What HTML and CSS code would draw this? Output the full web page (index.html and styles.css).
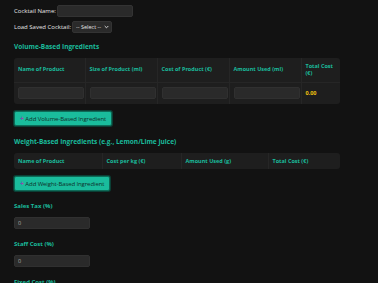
FILE: index.html
```html
<!DOCTYPE html>
<html lang="en">
<head>
    <meta charset="UTF-8">
    <meta name="viewport" content="width=device-width, initial-scale=1.0">
    <title>Cocktail Cost Calculator</title>
    <link rel="stylesheet" href="styles.css">
</head>
<body>
    <div class="calculator">
        <div class="field-row">
            <label for="cocktail-name">Cocktail Name:</label>
            <input type="text" id="cocktail-name" class="name-input">
        </div>
        <div class="field-row">
            <label for="saved">Load Saved Cocktail:</label>
            <span class="select-wrap">
                <select id="saved" class="saved-select">
                    <option>-- Select --</option>
                </select>
                <svg class="chevron" width="5" height="4" viewBox="0 0 5 4"><path d="M0.7 1 L2.5 2.8 L4.3 1" fill="none" stroke="#e6e6e6" stroke-width="0.9"/></svg>
            </span>
        </div>

        <h2 class="section-title first">Volume-Based Ingredients</h2>
        <div class="table-wrap">
            <table class="ingredients volume">
                <thead>
                    <tr>
                        <th class="c1">Name of Product</th>
                        <th class="c2">Size of Product (ml)</th>
                        <th class="c3">Cost of Product (€)</th>
                        <th class="c4">Amount Used (ml)</th>
                        <th class="c5">Total Cost (€)</th>
                    </tr>
                </thead>
                <tbody>
                    <tr>
                        <td><input type="text" class="cell-input"></td>
                        <td><input type="text" class="cell-input"></td>
                        <td><input type="text" class="cell-input"></td>
                        <td><input type="text" class="cell-input"></td>
                        <td class="total">0.00</td>
                    </tr>
                </tbody>
            </table>
        </div>
        <button class="add-btn"><span class="plus">+</span> Add Volume-Based Ingredient</button>

        <h2 class="section-title">Weight-Based Ingredients (e.g., Lemon/Lime Juice)</h2>
        <div class="table-wrap">
            <table class="ingredients weight">
                <thead>
                    <tr>
                        <th class="w1">Name of Product</th>
                        <th class="w2">Cost per kg (€)</th>
                        <th class="w3">Amount Used (g)</th>
                        <th class="w4">Total Cost (€)</th>
                    </tr>
                </thead>
            </table>
        </div>
        <button class="add-btn"><span class="plus">+</span> Add Weight-Based Ingredient</button>

        <div class="percent-group">
            <label class="percent-label">Sales Tax (%)</label>
            <input type="text" class="percent-input" value="0">
        </div>
        <div class="percent-group">
            <label class="percent-label">Staff Cost (%)</label>
            <input type="text" class="percent-input" value="0">
        </div>
        <div class="percent-group">
            <label class="percent-label">Fixed Cost (%)</label>
            <input type="text" class="percent-input" value="0">
        </div>
    </div>
</body>
</html>
```

FILE: styles.css
```css
* {
    margin: 0;
    padding: 0;
    box-sizing: border-box;
}

body {
    font-family: 'Open Sans', 'Noto Sans', sans-serif;
    background: #121212;
    color: #e0e0e0;
    font-size: 6px;
    height: 283px;
    overflow: hidden;
}

.calculator {
    padding: 5px 14px;
    width: 354px;
}

.field-row {
    display: flex;
    align-items: center;
    gap: 1px;
    height: 12px;
    margin-bottom: 4px;
}

.field-row label {
    color: #e6e6e6;
    font-size: 6px;
}

.name-input {
    width: 76px;
    height: 12px;
    background: #2a2a2a;
    border: 1px solid #333;
    border-radius: 2px;
    color: #eee;
}

.select-wrap {
    position: relative;
    display: inline-block;
    height: 12px;
}

.saved-select {
    appearance: none;
    -webkit-appearance: none;
    display: block;
    width: 40px;
    height: 12px;
    background: #2a2a2a;
    border: 1px solid #333;
    border-radius: 2px;
    color: #e6e6e6;
    font-family: inherit;
    font-size: 5.5px;
    padding: 0 8px 0 3px;
}

.chevron {
    position: absolute;
    right: 3px;
    top: 4px;
    pointer-events: none;
}

.section-title {
    color: #1abc9c;
    font-size: 6.5px;
    font-weight: bold;
    line-height: 10px;
    margin: 11px 0 6px;
}

.section-title.first {
    margin-top: 9px;
}

.table-wrap {
    background: #1e1e1e;
    border-radius: 3px;
    width: 326px;
    overflow: hidden;
}

.ingredients {
    border-collapse: collapse;
    width: 100%;
    table-layout: fixed;
}

.ingredients th {
    color: #1abc9c;
    font-size: 5.5px;
    font-weight: bold;
    text-align: left;
    padding: 0 4px;
    line-height: 7px;
    border-bottom: 1px solid #262626;
    border-right: 1px solid #262626;
}

.ingredients th:last-child,
.ingredients td:last-child {
    border-right: none;
}

.volume th {
    height: 24px;
}

.weight th {
    height: 16px;
    border-bottom: none;
}

.c1 { width: 71px; }
.c2 { width: 72px; }
.c3 { width: 72px; }
.c4 { width: 72px; }
.c5 { width: 39px; }

.w1 { width: 88px; }
.w2 { width: 79px; }
.w3 { width: 87px; }
.w4 { width: 72px; }

.ingredients td {
    height: 22px;
    padding: 0 1px 0 4px;
    border-right: 1px solid #262626;
}

.cell-input {
    display: block;
    width: 100%;
    height: 12px;
    background: #2a2a2a;
    border: 1px solid #303030;
    border-radius: 2px;
}

.total {
    color: #f1c40f;
    font-weight: bold;
    font-size: 5.5px;
}

.add-btn {
    display: block;
    margin-top: 7px;
    height: 15px;
    padding: 0 5px;
    background: #1abc9c;
    border: 1px solid #0e6b58;
    border-radius: 2px;
    box-shadow: 0 0 0 1px #0b3f35;
    color: #0f2f29;
    font-family: inherit;
    font-size: 6px;
    letter-spacing: -0.1px;
    cursor: pointer;
}

.plus {
    color: #8e44ad;
    font-weight: bold;
    font-size: 7px;
}

.percent-group {
    margin-top: 11px;
}

.percent-group:first-of-type {
    margin-top: 10px;
}

.percent-label {
    display: block;
    color: #1abc9c;
    font-size: 6px;
    font-weight: bold;
    line-height: 8px;
    margin-bottom: 7px;
}

.percent-input {
    width: 76px;
    height: 12px;
    background: #2a2a2a;
    border: 1px solid #303030;
    border-radius: 2px;
    color: #aaa;
    font-family: inherit;
    font-size: 5.5px;
    padding: 0 3px;
}
```
